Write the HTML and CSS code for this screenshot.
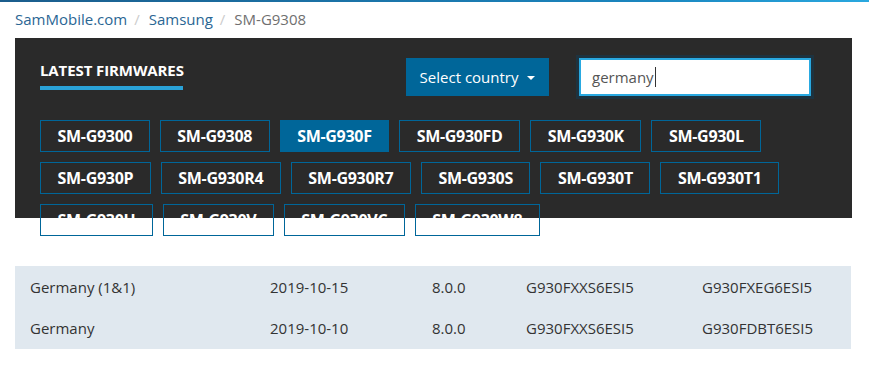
FILE: index.html
```html
<!DOCTYPE html>
<html>

<head>
    <meta charset="utf-8" />
    <title>SM-G9308 Firmware</title>
    <link rel="stylesheet" href="styles.css">
</head>

<body>
    <div class="topline"></div>
    <div class="page">
        <ol class="crumbs">
            <li><a href="#">SamMobile.com</a></li>
            <li><a href="#">Samsung</a></li>
            <li class="active">SM-G9308</li>
        </ol>

        <div class="panel">
            <div class="panel-head">
                <h2>Latest firmwares</h2>
                <button class="country">Select country <span class="caret"></span></button>
                <div class="search"><span>germany</span><span class="cursor"></span></div>
            </div>
            <div class="models">
                <a href="#">SM-G9300</a>
                <a href="#">SM-G9308</a>
                <a href="#" class="current">SM-G930F</a>
                <a href="#">SM-G930FD</a>
                <a href="#">SM-G930K</a>
                <a href="#">SM-G930L</a>
                <a href="#">SM-G930P</a>
                <a href="#">SM-G930R4</a>
                <a href="#">SM-G930R7</a>
                <a href="#">SM-G930S</a>
                <a href="#">SM-G930T</a>
                <a href="#">SM-G930T1</a>
                <a href="#">SM-G930U</a>
                <a href="#">SM-G930V</a>
                <a href="#">SM-G930VC</a>
                <a href="#">SM-G930W8</a>
            </div>
        </div>

        <table class="firmwares">
            <tr>
                <td class="c1">Germany (1&amp;1)</td>
                <td class="c2">2019-10-15</td>
                <td class="c3">8.0.0</td>
                <td class="c4">G930FXXS6ESI5</td>
                <td>G930FXEG6ESI5</td>
            </tr>
            <tr>
                <td class="c1">Germany</td>
                <td class="c2">2019-10-10</td>
                <td class="c3">8.0.0</td>
                <td class="c4">G930FXXS6ESI5</td>
                <td>G930FDBT6ESI5</td>
            </tr>
        </table>
    </div>
</body>

</html>
```

FILE: styles.css
```css
* {
    font-family: "Open Sans", "Noto Sans", sans-serif;
    box-sizing: border-box;
    padding: 0;
    margin: 0;
}

body {
    background: #fff;
    color: #333;
}

.topline {
    height: 2px;
    background: linear-gradient(to right, #1b5d8c, #1a86bf 75%, #2aa8df);
}

.page {
    width: 837px;
    margin-left: 15px;
}

/* breadcrumb */
.crumbs {
    list-style: none;
    display: flex;
    height: 36px;
    align-items: center;
    font-size: 15px;
    padding-bottom: 3px;
}

.crumbs li + li::before {
    content: "/";
    color: #ccc;
    padding: 0 9px 0 7px;
}

.crumbs a {
    color: #2a6694;
    text-decoration: none;
}

.crumbs .active {
    color: #6f6f6f;
}

/* dark panel */
.panel {
    background: #2a2a2a;
    height: 180px;
    padding: 19px 25px 0;
}

.panel-head {
    display: flex;
    align-items: flex-start;
    height: 40px;
}

.panel-head h2 {
    width: 366px;
    color: #fff;
    font-size: 15px;
    font-weight: 700;
    text-transform: uppercase;
    letter-spacing: -0.1px;
    padding-top: 2px;
    line-height: 22px;
}

.panel-head h2::after {
    content: "";
    display: block;
    width: 143px;
    height: 4px;
    margin-top: 5px;
    background: #2aa2d8;
}

.country {
    width: 143px;
    height: 38px;
    margin-top: 1px;
    border: none;
    background: #006699;
    color: #fff;
    font-size: 15px;
    cursor: pointer;
}

.caret {
    display: inline-block;
    margin-left: 5px;
    vertical-align: 3px;
    border-top: 4px solid #fff;
    border-left: 4px solid transparent;
    border-right: 4px solid transparent;
}

.search {
    width: 232px;
    height: 38px;
    margin: 1px 0 0 30px;
    background: #fff;
    border: 2px solid #29a9e1;
    box-shadow: 0 0 0 3px #1d3340;
    padding-left: 11px;
    display: flex;
    align-items: center;
    font-size: 15px;
    color: #555;
}

.cursor {
    width: 1px;
    height: 20px;
    background: #333;
    margin-left: 1px;
}

/* model buttons */
.models {
    display: flex;
    flex-wrap: wrap;
    gap: 10px;
    margin-top: 23px;
    width: 787px;
}

.models a {
    display: inline-flex;
    align-items: center;
    height: 32px;
    padding: 0 16.5px;
    border: 1px solid #006699;
    color: #fff;
    font-size: 16px;
    font-weight: 700;
    letter-spacing: -0.3px;
    text-decoration: none;
}

.models a.current {
    background: #006699;
}

/* firmware table */
.firmwares {
    margin-top: 48px;
    width: 836px;
    border-collapse: collapse;
    background: #e0e8ef;
    font-size: 15px;
    color: #333;
}

.firmwares td {
    height: 42px;
    padding-left: 15px;
    white-space: nowrap;
}

.firmwares tr:first-child td {
    height: 41px;
}

.c1 {
    width: 240px;
}

.c2 {
    width: 162px;
}

.c3 {
    width: 94px;
}

.c4 {
    width: 176px;
}
```
